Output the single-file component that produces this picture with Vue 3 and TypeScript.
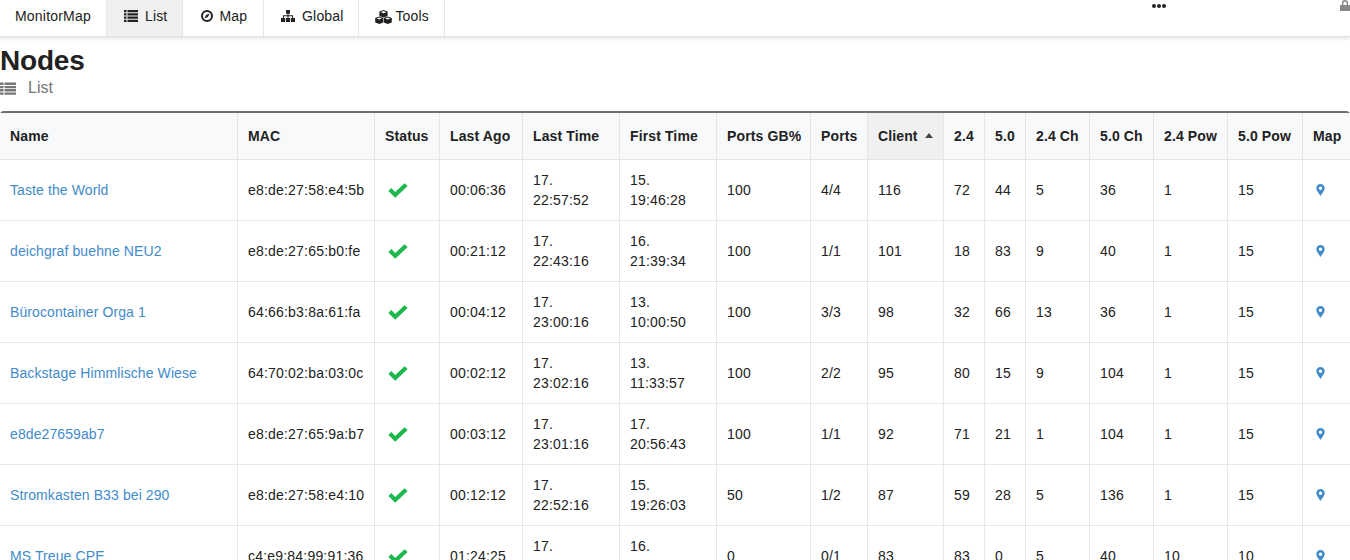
<script setup lang="ts">
interface NodeRow {
  name: string;
  mac: string;
  ago: string;
  last: string[];
  first: string[];
  gb: number;
  ports: string;
  client: number;
  c24: number;
  c50: number;
  ch24: number;
  ch50: number;
  pow24: number;
  pow50: number;
}

const tabs = [
  { label: "List", icon: "list", active: true },
  { label: "Map", icon: "compass", active: false },
  { label: "Global", icon: "sitemap", active: false },
  { label: "Tools", icon: "cubes", active: false },
];

const columns = [
  { label: "Name", width: 238 },
  { label: "MAC", width: 137 },
  { label: "Status", width: 65 },
  { label: "Last Ago", width: 83 },
  { label: "Last Time", width: 97 },
  { label: "First Time", width: 97 },
  { label: "Ports GB%", width: 94 },
  { label: "Ports", width: 57 },
  { label: "Client", width: 76 },
  { label: "2.4", width: 41 },
  { label: "5.0", width: 41 },
  { label: "2.4 Ch", width: 64 },
  { label: "5.0 Ch", width: 64 },
  { label: "2.4 Pow", width: 74 },
  { label: "5.0 Pow", width: 75 },
  { label: "Map", width: 47 },
];

const rows: NodeRow[] = [
  { name: "Taste the World", mac: "e8:de:27:58:e4:5b", ago: "00:06:36", last: ["17.", "22:57:52"], first: ["15.", "19:46:28"], gb: 100, ports: "4/4", client: 116, c24: 72, c50: 44, ch24: 5, ch50: 36, pow24: 1, pow50: 15 },
  { name: "deichgraf buehne NEU2", mac: "e8:de:27:65:b0:fe", ago: "00:21:12", last: ["17.", "22:43:16"], first: ["16.", "21:39:34"], gb: 100, ports: "1/1", client: 101, c24: 18, c50: 83, ch24: 9, ch50: 40, pow24: 1, pow50: 15 },
  { name: "Bürocontainer Orga 1", mac: "64:66:b3:8a:61:fa", ago: "00:04:12", last: ["17.", "23:00:16"], first: ["13.", "10:00:50"], gb: 100, ports: "3/3", client: 98, c24: 32, c50: 66, ch24: 13, ch50: 36, pow24: 1, pow50: 15 },
  { name: "Backstage Himmlische Wiese", mac: "64:70:02:ba:03:0c", ago: "00:02:12", last: ["17.", "23:02:16"], first: ["13.", "11:33:57"], gb: 100, ports: "2/2", client: 95, c24: 80, c50: 15, ch24: 9, ch50: 104, pow24: 1, pow50: 15 },
  { name: "e8de27659ab7", mac: "e8:de:27:65:9a:b7", ago: "00:03:12", last: ["17.", "23:01:16"], first: ["17.", "20:56:43"], gb: 100, ports: "1/1", client: 92, c24: 71, c50: 21, ch24: 1, ch50: 104, pow24: 1, pow50: 15 },
  { name: "Stromkasten B33 bei 290", mac: "e8:de:27:58:e4:10", ago: "00:12:12", last: ["17.", "22:52:16"], first: ["15.", "19:26:03"], gb: 50, ports: "1/2", client: 87, c24: 59, c50: 28, ch24: 5, ch50: 136, pow24: 1, pow50: 15 },
  { name: "MS Treue CPE", mac: "c4:e9:84:99:91:36", ago: "01:24:25", last: ["17.", "21:40:03"], first: ["16.", "18:12:40"], gb: 0, ports: "0/1", client: 83, c24: 83, c50: 0, ch24: 5, ch50: 40, pow24: 10, pow50: 10 },
];
</script>

<template>
  <div class="page">
    <nav class="navbar">
      <span class="brand">MonitorMap</span>
      <a
        v-for="tab in tabs"
        :key="tab.label"
        class="tab"
        :class="[tab.icon, { active: tab.active }]"
      >
        <svg v-if="tab.icon === 'list'" class="tab-icon" width="14" height="12" viewBox="0 0 14 12">
          <path d="M0 0h2.500v2.200H0zM3.500 0H14v2.200H3.500zM0 3.200h2.500v2.200H0zM3.500 3.200H14v2.200H3.500zM0 6.500h2.500v2.200H0zM3.500 6.500H14v2.200H3.500zM0 9.700h2.500V12H0zM3.500 9.700H14V12H3.500z" fill="#222" />
        </svg>
        <svg v-else-if="tab.icon === 'compass'" class="tab-icon" width="12" height="12" viewBox="0 0 12 12">
          <circle cx="6" cy="6" r="5" fill="none" stroke="#222" stroke-width="2" />
          <path d="M8.600 3.400 7 7 3.400 8.600 5 5z" fill="#222" />
        </svg>
        <svg v-else-if="tab.icon === 'sitemap'" class="tab-icon" width="14" height="12" viewBox="0 0 14 12">
          <path d="M5 0h4v3.800H7.500v1.500h4.600V8H14v4H9.900V8h1.200V6.300H7.500V8h1.600v4H4.900V8h1.600V6.300H2.900V8h1.200v4H0V8h1.900V5.300h4.600V3.800H5z" fill="#222" />
        </svg>
        <svg v-else class="tab-icon" width="17" height="14" viewBox="0 0 17 14">
          <path d="M8.500 0 12.600 1.500V6L8.500 7.500 4.400 6V1.500zM4.300 6.500 8.200 8v4.400L4.300 14 .2 12.400V8zM12.700 6.500 16.800 8v4.400L12.700 14 8.800 12.400V8z" fill="#222" />
          <path d="M6 2.200 8.500 3.200 11 2.200V1.900L8.500 1 6 1.900zM1.800 8.600 4.300 9.600 6.700 8.600V8.400L4.300 7.500 1.800 8.400zM10.300 8.600 12.700 9.600 15.200 8.600V8.400L12.700 7.500 10.300 8.400z" fill="#fff" />
        </svg>
        <span>{{ tab.label }}</span>
      </a>
      <div class="nav-right">
        <span class="dots"><i></i><i></i><i></i></span>
        <svg class="lock" width="10" height="11" viewBox="0 0 10 11">
          <path d="M1.900 5V3.100a3.100 3.100 0 0 1 6.200 0V5H10v6H0V5zM3.400 5h3.200V3.100a1.600 1.600 0 0 0-3.200 0z" fill="#888" />
        </svg>
      </div>
    </nav>

    <header class="heading">
      <h1>Nodes</h1>
      <div class="sub">
        <svg width="16" height="13" viewBox="0 0 16 13">
          <path d="M0 .5h3.600v2.400H0zM4.600.5H16v2.400H4.600zM0 3.900h3.600v2.300H0zM4.600 3.900H16v2.300H4.600zM0 7.100h3.600v2.400H0zM4.600 7.100H16v2.400H4.600zM0 10.400h3.600v2.400H0zM4.600 10.400H16v2.400H4.600z" fill="#777" />
        </svg>
        <span>List</span>
      </div>
    </header>

    <div class="panel">
      <table>
        <colgroup>
          <col v-for="c in columns" :key="c.label" :style="{ width: c.width + 'px' }" />
        </colgroup>
        <thead>
          <tr>
            <th
              v-for="c in columns"
              :key="c.label"
              :class="{ sorted: c.label === 'Client' }"
            >
              {{ c.label }}<i v-if="c.label === 'Client'" class="caret"></i>
            </th>
          </tr>
        </thead>
        <tbody>
          <tr v-for="r in rows" :key="r.mac">
            <td><a class="link">{{ r.name }}</a></td>
            <td>{{ r.mac }}</td>
            <td>
              <svg class="check" width="20" height="15" viewBox="0 0 20 15">
                <path d="M7.200 14.800.4 8l2.900-2.900 3.900 3.900L16.600.2l3 2.900z" fill="#1cb84d" />
              </svg>
            </td>
            <td>{{ r.ago }}</td>
            <td>{{ r.last[0] }}<br />{{ r.last[1] }}</td>
            <td>{{ r.first[0] }}<br />{{ r.first[1] }}</td>
            <td>{{ r.gb }}</td>
            <td>{{ r.ports }}</td>
            <td>{{ r.client }}</td>
            <td>{{ r.c24 }}</td>
            <td>{{ r.c50 }}</td>
            <td>{{ r.ch24 }}</td>
            <td>{{ r.ch50 }}</td>
            <td>{{ r.pow24 }}</td>
            <td>{{ r.pow50 }}</td>
            <td>
              <svg class="pin" width="9" height="12" viewBox="0 0 9 12">
                <path fill-rule="evenodd" d="M4.500 0A4.200 4.200 0 0 1 8.700 4.200C8.700 6.600 6 9.300 4.500 12 3 9.300.3 6.600.3 4.200A4.200 4.200 0 0 1 4.500 0zm0 2.500a1.700 1.700 0 1 0 0 3.400 1.700 1.700 0 0 0 0-3.400z" fill="#428bca" />
              </svg>
            </td>
          </tr>
        </tbody>
      </table>
    </div>
  </div>
</template>

<style>
html,
body {
  margin: 0;
  overflow: hidden;
  background: #fff;
}
</style>

<style scoped>
.page {
  width: 1350px;
  height: 560px;
  overflow: hidden;
  font-family: "Liberation Sans", Arial, sans-serif;
  font-size: 14px;
  line-height: 20px;
  color: #222;
}

.navbar {
  display: flex;
  height: 36px;
  border-bottom: 1px solid #e0e0e0;
  box-shadow: 0 1px 4px rgba(0, 0, 0, 0.14);
}

.brand {
  padding: 6px 15px 0;
  width: 76px;
  white-space: nowrap;
  letter-spacing: 0.2px;
  border-right: 1px solid #e7e7e7;
}

.tab {
  display: flex;
  align-items: flex-start;
  gap: 7px;
  padding: 6px 15px 0 17px;
  letter-spacing: 0.15px;
  border-right: 1px solid #e7e7e7;
}

.tab.active {
  background: #f0f0f0;
}

.tab.compass {
  gap: 6px;
  padding-left: 18px;
  padding-right: 16px;
}

.tab.cubes {
  gap: 3px;
  padding-left: 16px;
}

.tab-icon {
  margin-top: 4px;
  flex: none;
}

.nav-right {
  flex: 1;
  position: relative;
}

.dots {
  position: absolute;
  left: 707px;
  top: 4px;
  display: flex;
  gap: 1px;
}

.dots i {
  width: 4px;
  height: 4px;
  border-radius: 50%;
  background: #222;
}

.lock {
  position: absolute;
  right: 0;
  top: 0;
}

.heading {
  height: 74px;
  overflow: hidden;
}

h1 {
  margin: 10px 0 0;
  font-size: 28px;
  line-height: 28px;
  font-weight: 700;
  letter-spacing: -0.2px;
  color: #222;
}

.sub {
  display: flex;
  align-items: center;
  gap: 12px;
  height: 20px;
  margin-top: 3px;
  font-size: 16px;
  color: #777;
}

.panel {
  border-top: 2px solid #6f6f6f;
  border-top-left-radius: 4px;
  border-top-right-radius: 4px;
}

table {
  width: 1350px;
  table-layout: fixed;
  border-collapse: separate;
  border-spacing: 0;
}

th {
  height: 46px;
  padding: 0 10px;
  text-align: left;
  font-weight: 700;
  letter-spacing: 0.12px;
  white-space: nowrap;
  background: #f8f9fb;
  border-right: 1px solid #e5e5e5;
  border-bottom: 1px solid #e5e5e5;
}

th.sorted {
  background: #f0f0f0;
}

th:last-child,
td:last-child {
  border-right: 0;
}

td {
  padding: 10px;
  white-space: nowrap;
  letter-spacing: 0.2px;
  border-right: 1px solid #e8e8e8;
  border-bottom: 1px solid #e8e8e8;
}

.caret {
  display: inline-block;
  margin-left: 7px;
  vertical-align: 3px;
  border-left: 4.5px solid transparent;
  border-right: 4.5px solid transparent;
  border-bottom: 5px solid #444;
}

.link {
  color: #428bca;
  letter-spacing: 0.1px;
}

.check {
  display: block;
  margin-left: 3px;
}

.pin {
  display: block;
  margin-left: 3px;
}
</style>
